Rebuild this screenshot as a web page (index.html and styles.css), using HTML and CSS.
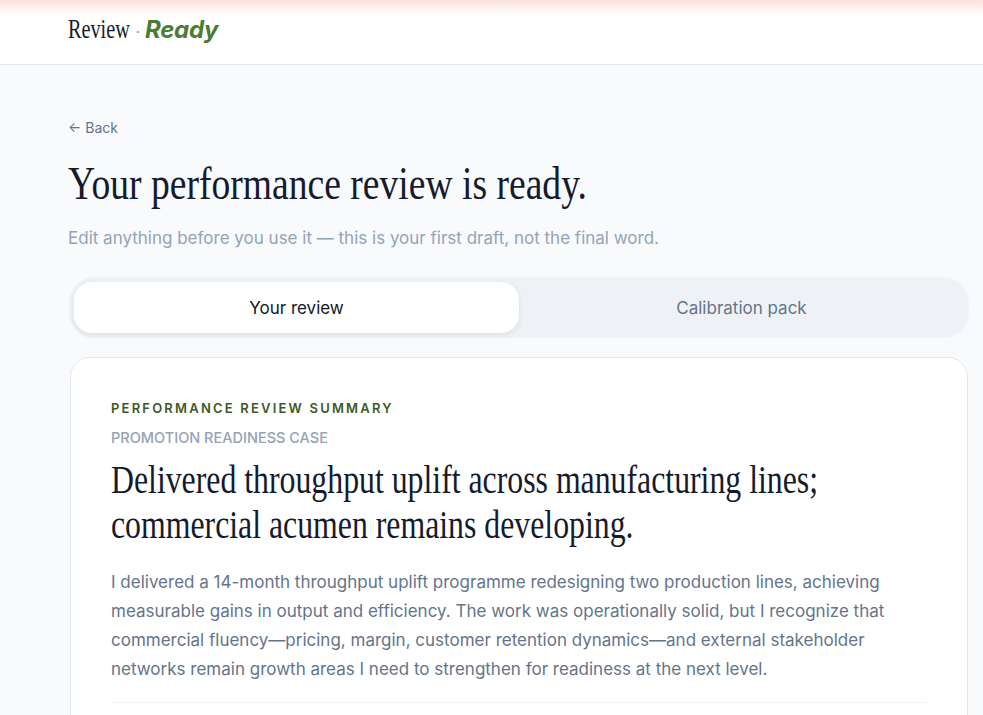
FILE: index.html
```html
<!DOCTYPE html>
<html lang="en">

<head>
  <meta charset="UTF-8">
  <meta name="viewport" content="width=device-width, initial-scale=1.0">
  <title>Review · Ready</title>
  <link rel="stylesheet" href="styles.css">
</head>

<body>
  <header class="topbar">
    <div class="brand">
      <span class="brand-name">Review</span>
      <span class="brand-dot">·</span>
      <span class="brand-tag">Ready</span>
    </div>
  </header>

  <main class="page">
    <a class="back-link" href="#">&larr; Back</a>
    <h1 class="page-title">Your performance review is ready.</h1>
    <p class="page-sub">Edit anything before you use it — this is your first draft, not the final word.</p>

    <div class="tabs">
      <button class="tab active">Your review</button>
      <button class="tab">Calibration pack</button>
    </div>

    <section class="summary-card">
      <div class="eyebrow">Performance review summary</div>
      <div class="case-label">Promotion readiness case</div>
      <h2 class="summary-title">Delivered throughput uplift across manufacturing lines; commercial acumen remains developing.</h2>
      <p class="summary-text">I delivered a 14-month throughput uplift programme redesigning two production lines, achieving measurable gains in output and efficiency. The work was operationally solid, but I recognize that commercial fluency—pricing, margin, customer retention dynamics—and external stakeholder networks remain growth areas I need to strengthen for readiness at the next level.</p>
      <hr class="divider">
    </section>
  </main>
</body>

</html>
```

FILE: styles.css
```css
body {
  font-family: Inter, "Noto Sans", sans-serif;
  background-color: #f8fafc;
  margin: 0;
  padding: 0;
  color: #0f172a;
}

/* the display serif is a narrow face, so the nearest installed serif is squeezed */
.brand-name,
.page-title,
.summary-title {
  font-family: "Liberation Serif", serif;
  font-weight: 400;
  color: #151b2c;
  transform-origin: left center;
}

.topbar {
  height: 65px;
  background: linear-gradient(to bottom, #f9e3dc 0px, #ffffff 16px);
  border-bottom: 1px solid #e2e8f0;
  box-sizing: border-box;
  padding-left: 68px;
  padding-bottom: 5px;
  display: flex;
  align-items: center;
}

.brand {
  display: flex;
  align-items: baseline;
  gap: 5px;
}

.brand-name {
  display: inline-block;
  font-size: 27px;
  transform: scaleX(0.75);
  margin-right: -20px;
}

.brand-dot {
  color: #94a3b8;
  font-size: 16px;
}

.brand-tag {
  font-size: 24px;
  font-weight: 700;
  font-style: italic;
  color: #4a7c35;
  letter-spacing: -0.3px;
}

.page {
  width: 900px;
  padding: 52px 0 0 68px;
}

.back-link {
  display: inline-block;
  font-size: 14px;
  color: #64748b;
  text-decoration: none;
}

.page-title {
  font-size: 47px;
  line-height: 52px;
  transform: scaleX(0.8);
  width: 125%;
  margin: 20px 0 0;
}

.page-sub {
  font-size: 17px;
  color: #94a3b8;
  margin: 19px 0 0;
}

.tabs {
  margin-top: 30px;
  margin-left: 2px;
  background-color: #eef2f7;
  border-radius: 24px;
  padding: 4px;
  display: grid;
  grid-template-columns: 1fr 1fr;
  box-shadow: 0 0 0 1px #f1f5f9;
}

.tab {
  font-family: inherit;
  font-size: 17px;
  border: none;
  background: none;
  height: 51px;
  border-radius: 18px;
  color: #64748b;
  cursor: pointer;
}

.tab.active {
  background-color: #fff;
  color: #111827;
  box-shadow: 0 2px 6px rgba(15, 23, 42, 0.08);
}

.summary-card {
  margin-top: 20px;
  margin-left: 2px;
  background-color: #fff;
  border: 1px solid #e2e8f0;
  border-radius: 20px;
  padding: 42px 40px 60px;
}

.eyebrow {
  font-size: 13px;
  font-weight: 600;
  letter-spacing: 2.2px;
  text-transform: uppercase;
  color: #3b5a26;
}

.case-label {
  font-size: 14.5px;
  font-weight: 500;
  text-transform: uppercase;
  color: #94a3b8;
  margin-top: 13px;
}

.summary-title {
  font-size: 39px;
  line-height: 45px;
  transform: scaleX(0.815);
  width: 122.7%;
  margin: 11px 0 0;
}

.summary-text {
  font-size: 17px;
  line-height: 29px;
  color: #64748b;
  margin: 21px 0 0;
}

.divider {
  border: none;
  border-top: 1px solid #eef2f7;
  margin: 18px 0 0;
}
```
